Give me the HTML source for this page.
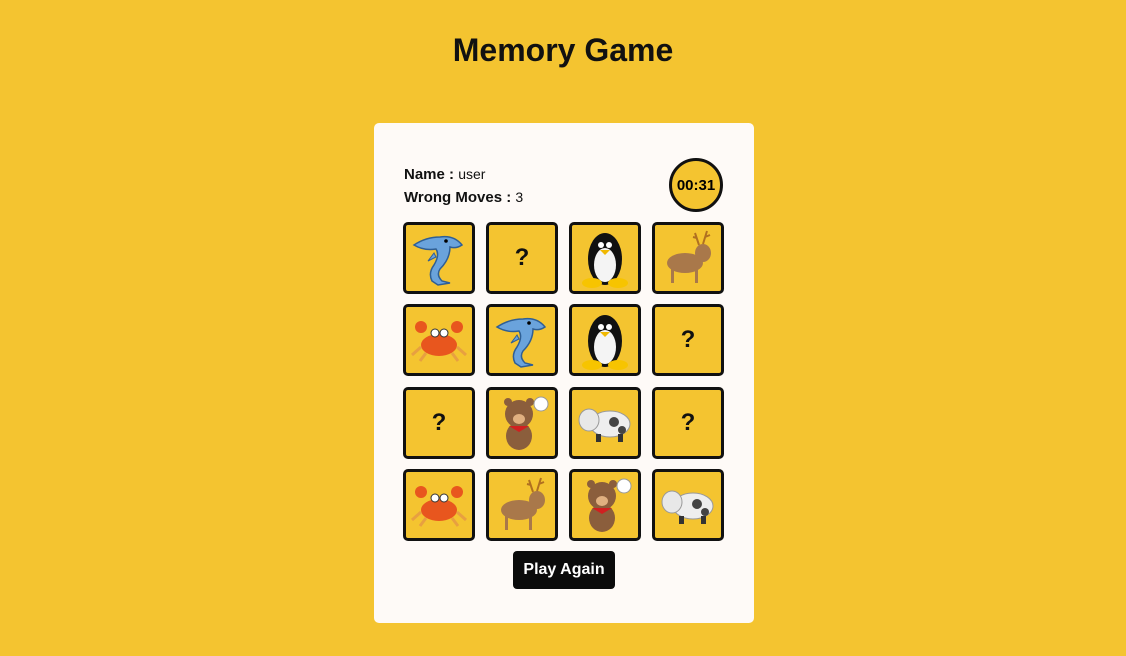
<!DOCTYPE html>
<html><head><meta charset="utf-8"><style>
body{margin:0;width:1126px;height:656px;background:#f4c430;font-family:"Liberation Sans",sans-serif;position:relative;overflow:hidden}
h1{position:absolute;top:32px;left:0;width:1126px;text-align:center;margin:0;font-size:32px;font-weight:bold;color:#111}
.card{position:absolute;left:374px;top:123px;width:380px;height:500px;background:#fefaf7;border-radius:5px}
.info{position:absolute;left:30px;top:40px;font-size:15px;color:#111;line-height:22px}
.info span{font-size:14px}
.timer{position:absolute;left:295px;top:35px;width:48px;height:48px;border:3px solid #111;border-radius:50%;background:#f4c430;font-weight:bold;font-size:15px;display:flex;align-items:center;justify-content:center}
.t{position:absolute;width:66px;height:66px;border:3px solid #111;border-radius:5px;background:#f4c430;display:flex;align-items:center;justify-content:center;font-weight:bold;font-size:24px;color:#111}
.btn{position:absolute;left:139px;top:428px;width:102px;height:38px;background:#0b0b0b;color:#fff;border-radius:4px;font-weight:bold;font-size:16px;display:flex;align-items:center;justify-content:center}
</style></head><body>
<h1>Memory Game</h1>
<div class="card">
<div class="info"><b>Name :</b> <span>user</span><br><b>Wrong Moves :</b> <span>3</span></div>
<div class="timer">00:31</div>
<svg width="0" height="0" style="position:absolute">
<defs>
<g id="dol"><path d="M8 20 Q20 12 34 12 Q48 10 56 20 Q50 24 44 22 Q44 34 34 44 Q30 50 36 56 L44 58 L32 60 L26 56 Q22 48 28 40 Q34 30 30 24 Q18 26 8 20Z" fill="#6aa3dc" stroke="#2f5f95" stroke-width="1.5"/><path d="M28 28 L22 36 L30 32Z" fill="#6aa3dc" stroke="#2f5f95"/><circle cx="40" cy="16" r="1.8" fill="#000"/></g>
<g id="pen"><ellipse cx="33" cy="34" rx="17" ry="26" fill="#111"/><ellipse cx="33" cy="40" rx="11" ry="17" fill="#f4f4f4"/><circle cx="29" cy="20" r="3" fill="#fff"/><circle cx="37" cy="20" r="3" fill="#fff"/><path d="M28 25 L38 25 L33 30Z" fill="#f0b800"/><ellipse cx="20" cy="58" rx="10" ry="5" fill="#f7c400"/><ellipse cx="46" cy="58" rx="10" ry="5" fill="#f7c400"/></g>
<g id="deer"><ellipse cx="30" cy="38" rx="18" ry="10" fill="#a9784a"/><rect x="16" y="44" width="3" height="14" fill="#a9784a"/><rect x="40" y="44" width="3" height="14" fill="#a9784a"/><ellipse cx="48" cy="28" rx="8" ry="9" fill="#a9784a"/><path d="M44 20 L40 8 M48 19 L52 6 M42 13 L38 12 M50 12 L55 10" stroke="#b07020" stroke-width="2"/></g>
<g id="crab"><ellipse cx="33" cy="38" rx="18" ry="11" fill="#e8561e"/><circle cx="15" cy="20" r="6" fill="#e8561e"/><circle cx="51" cy="20" r="6" fill="#e8561e"/><circle cx="29" cy="26" r="4" fill="#fff" stroke="#333"/><circle cx="38" cy="26" r="4" fill="#fff" stroke="#333"/><path d="M15 40 L6 48 M51 40 L60 48 M20 46 L14 54 M46 46 L52 54" stroke="#e8a040" stroke-width="3"/></g>
<g id="bear"><ellipse cx="30" cy="46" rx="13" ry="14" fill="#8b5e3c"/><circle cx="30" cy="24" r="14" fill="#8b5e3c"/><circle cx="19" cy="12" r="4" fill="#8b5e3c"/><circle cx="41" cy="12" r="4" fill="#8b5e3c"/><ellipse cx="30" cy="29" rx="6" ry="5" fill="#e0b080"/><path d="M20 36 L40 36 L30 42Z" fill="#d02020"/><circle cx="52" cy="14" r="7" fill="#fff" stroke="#999"/></g>
<g id="cow"><ellipse cx="38" cy="34" rx="20" ry="13" fill="#eee" stroke="#999"/><ellipse cx="17" cy="30" rx="10" ry="11" fill="#e8e8e8" stroke="#999"/><circle cx="42" cy="32" r="5" fill="#444"/><circle cx="50" cy="40" r="4" fill="#444"/><rect x="24" y="44" width="5" height="8" fill="#333"/><rect x="46" y="44" width="5" height="8" fill="#333"/></g>
</defs></svg>
<div class="t" style="left:29px;top:99px"><svg width="66" height="66"><use href="#dol"/></svg></div>
<div class="t" style="left:112px;top:99px">?</div>
<div class="t" style="left:195px;top:99px"><svg width="66" height="66"><use href="#pen"/></svg></div>
<div class="t" style="left:278px;top:99px"><svg width="66" height="66"><use href="#deer"/></svg></div>
<div class="t" style="left:29px;top:181px"><svg width="66" height="66"><use href="#crab"/></svg></div>
<div class="t" style="left:112px;top:181px"><svg width="66" height="66"><use href="#dol"/></svg></div>
<div class="t" style="left:195px;top:181px"><svg width="66" height="66"><use href="#pen"/></svg></div>
<div class="t" style="left:278px;top:181px">?</div>
<div class="t" style="left:29px;top:264px">?</div>
<div class="t" style="left:112px;top:264px"><svg width="66" height="66"><use href="#bear"/></svg></div>
<div class="t" style="left:195px;top:264px"><svg width="66" height="66"><use href="#cow"/></svg></div>
<div class="t" style="left:278px;top:264px">?</div>
<div class="t" style="left:29px;top:346px"><svg width="66" height="66"><use href="#crab"/></svg></div>
<div class="t" style="left:112px;top:346px"><svg width="66" height="66"><use href="#deer"/></svg></div>
<div class="t" style="left:195px;top:346px"><svg width="66" height="66"><use href="#bear"/></svg></div>
<div class="t" style="left:278px;top:346px"><svg width="66" height="66"><use href="#cow"/></svg></div>
<div class="btn">Play Again</div>
</div>
</body></html>
